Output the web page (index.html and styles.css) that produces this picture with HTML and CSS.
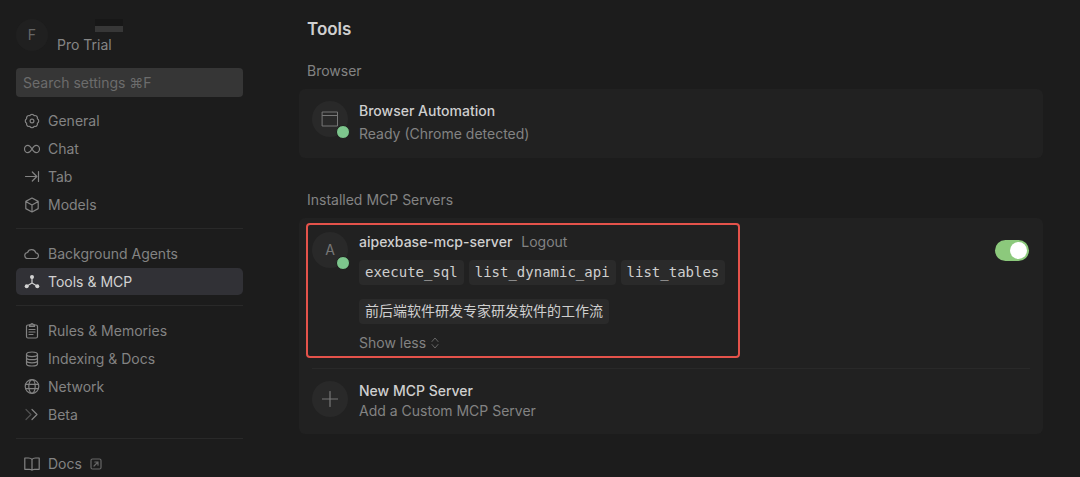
FILE: index.html
```html
<!DOCTYPE html>
<html lang="en">
<head>
    <meta charset="UTF-8">
    <meta name="viewport" content="width=device-width, initial-scale=1.0">
    <title>Tools &amp; MCP</title>
    <link rel="stylesheet" href="styles.css">
</head>
<body>
    <aside class="sidebar">
        <div class="account">
            <div class="account-avatar">F</div>
            <div class="account-info">
                <div class="account-name"></div>
                <div class="account-plan">Pro Trial</div>
            </div>
        </div>

        <input type="search" class="search" placeholder="Search settings ⌘F" aria-label="Search settings">

        <nav>
            <div class="nav-group">
                <a href="#general" class="nav-item">
                    <svg class="icon" viewBox="0 0 16 16"><path d="M5.780 2.640A2.500 2.500 0 0 1 10.220 2.640A2.500 2.500 0 0 1 13.360 5.780A2.500 2.500 0 0 1 13.360 10.220A2.500 2.500 0 0 1 10.220 13.360A2.500 2.500 0 0 1 5.780 13.360A2.500 2.500 0 0 1 2.640 10.220A2.500 2.500 0 0 1 2.640 5.780A2.500 2.500 0 0 1 5.780 2.640z"/><circle cx="8" cy="8" r="1.900"/></svg>
                    General
                </a>
                <a href="#chat" class="nav-item">
                    <svg class="icon" viewBox="0 0 16 16"><path d="M8 8C6.500 5.500 5.500 4.300 3.900 4.300a3.400 3.700 0 0 0 0 7.400C5.500 11.700 6.500 10.500 8 8s2.500-3.700 4.100-3.700a3.400 3.700 0 0 1 0 7.400C10.500 11.700 9.500 10.500 8 8z"/></svg>
                    Chat
                </a>
                <a href="#tab" class="nav-item">
                    <svg class="icon" viewBox="0 0 16 16"><path d="M1.500 7.500h11M8.300 3l4.500 4.500L8.300 12M14.500 2.500v10"/></svg>
                    Tab
                </a>
                <a href="#models" class="nav-item">
                    <svg class="icon" viewBox="0 0 16 16"><path d="M8 1l6.200 3.400v7.200L8 15l-6.200-3.400V4.400zM1.800 4.400L8 8l6.200-3.600M8 8v7"/></svg>
                    Models
                </a>
            </div>
            <hr>
            <div class="nav-group">
                <a href="#agents" class="nav-item">
                    <svg class="icon" viewBox="0 0 16 16"><path d="M4 12.500a3 3 0 0 1-.4-6 4.300 4.300 0 0 1 8.200.3 2.900 2.900 0 0 1 .5 5.700z"/></svg>
                    Background Agents
                </a>
                <a href="#tools" class="nav-item active" aria-current="page">
                    <svg class="icon" viewBox="0 0 16 16"><path d="M8 3v6M8 9l-5 3M8 9l5 3"/><g class="solid"><circle cx="8" cy="3" r="2"/><circle cx="2.700" cy="12.300" r="2"/><circle cx="13.300" cy="12.300" r="2"/></g></svg>
                    Tools &amp; MCP
                </a>
            </div>
            <hr>
            <div class="nav-group">
                <a href="#rules" class="nav-item">
                    <svg class="icon" viewBox="0 0 16 16"><rect x="2.500" y="2" width="11" height="13" rx="1.500"/><path d="M5.500 3.500V1.800h1.300a1.200 1.200 0 0 1 2.400 0h1.300v1.700zM5 6.500h6M5 9h6M5 11.500h4"/></svg>
                    Rules &amp; Memories
                </a>
                <a href="#indexing" class="nav-item">
                    <svg class="icon" viewBox="0 0 16 16"><ellipse cx="8" cy="3.300" rx="5.500" ry="2.300"/><path d="M2.500 3.300v9.400c0 1.300 2.500 2.300 5.500 2.300s5.500-1 5.500-2.300V3.300M2.500 6.400c0 1.300 2.500 2.300 5.500 2.300s5.500-1 5.500-2.300M2.500 9.600c0 1.300 2.500 2.300 5.500 2.300s5.500-1 5.500-2.300"/></svg>
                    Indexing &amp; Docs
                </a>
                <a href="#network" class="nav-item">
                    <svg class="icon" viewBox="0 0 16 16"><circle cx="8" cy="7.500" r="6.800"/><ellipse cx="8" cy="7.500" rx="3.200" ry="6.800"/><path d="M1.600 5.300h12.800M1.600 9.700h12.800"/></svg>
                    Network
                </a>
                <a href="#beta" class="nav-item">
                    <svg class="icon" viewBox="0 0 16 16"><path class="faded" d="M2 2.500l5 5-5 5"/><path d="M8 2.500l5 5-5 5"/></svg>
                    Beta
                </a>
            </div>
            <hr>
            <div class="nav-group">
                <a href="#docs" class="nav-item">
                    <svg class="icon" viewBox="0 0 16 16"><path d="M8 3.500C7.300 2.300 6 2 4.500 2H.8v11.300h4.700c1.300 0 2.500.3 2.500 1 0-.7 1.200-1 2.500-1h4.700V2h-3.700C10 2 8.700 2.300 8 3.500zM8 3.500v10.800"/></svg>
                    Docs
                    <svg class="icon-external" viewBox="0 0 12 12"><rect x="1" y="1" width="10" height="10" rx="1.500"/><path d="M4 8l4-4M4.800 4H8v3.200"/></svg>
                </a>
            </div>
        </nav>
    </aside>

    <main>
        <h1>Tools</h1>

        <section>
            <h2>Browser</h2>
            <div class="card">
                <div class="row">
                    <div class="badge online">
                        <svg class="icon-window" viewBox="0 0 18 16"><rect x="1.500" y="1" width="15" height="14"/><path d="M1.500 4.500h15"/></svg>
                    </div>
                    <div class="row-text">
                        <h3>Browser Automation</h3>
                        <p class="status">Ready (Chrome detected)</p>
                    </div>
                </div>
            </div>
        </section>

        <section>
            <h2>Installed MCP Servers</h2>
            <div class="card servers">
                <div class="server">
                    <div class="highlight">
                        <div class="badge online">A</div>
                        <div class="row-text">
                            <div class="server-title">
                                <h3>aipexbase-mcp-server</h3>
                                <button type="button" class="link">Logout</button>
                            </div>
                            <div class="tags">
                                <code>execute_sql</code>
                                <code>list_dynamic_api</code>
                                <code>list_tables</code>
                                <code lang="zh">前后端软件研发专家研发软件的工作流</code>
                            </div>
                            <button type="button" class="link">
                                Show less
                                <svg class="icon-sort" viewBox="0 0 8 12"><path d="M1 4.500L4 1l3 3.500M1 7.500L4 11l3-3.500"/></svg>
                            </button>
                        </div>
                    </div>
                    <input type="checkbox" class="toggle" aria-label="Enable aipexbase-mcp-server" checked>
                </div>
                <hr>
                <div class="row">
                    <div class="badge">
                        <svg class="icon" viewBox="0 0 16 16"><path d="M8 .5v15M.5 8h15"/></svg>
                    </div>
                    <div class="row-text">
                        <h3>New MCP Server</h3>
                        <p>Add a Custom MCP Server</p>
                    </div>
                </div>
            </div>
        </section>
    </main>
</body>
</html>
```
FILE: styles.css
```css
* {
    box-sizing: border-box;
}
body {
    display: flex;
    height: 100vh;
    margin: 0;
    overflow: hidden;
    background: #1c1c1c;
    color: #838383;
    font-family: Inter, "Noto Sans CJK SC", sans-serif;
    font-size: 14px;
    line-height: 20px;
}
h1, h2, h3, p {
    margin: 0;
    font-size: 14px;
    font-weight: 400;
}
hr {
    margin: 10px 0 11px;
    border: none;
    border-top: 1px solid #292929;
}
svg {
    flex: none;
    fill: none;
    stroke: currentColor;
    stroke-width: 1.2;
    stroke-linejoin: round;
    stroke-linecap: round;
}
.icon {
    width: 16px;
    height: 16px;
}

/* Sidebar */
.sidebar {
    flex: none;
    width: 243px;
    padding: 19px 0 0 16px;
}
.account {
    display: flex;
    gap: 9px;
}
.account-avatar {
    width: 32px;
    height: 32px;
    border-radius: 50%;
    background: #202020;
    color: #666;
    line-height: 32px;
    text-align: center;
}
.account-name {
    width: 28px;
    height: 13px;
    margin: 0 0 3px 38px;
    border-top: 7px solid #171717;
    background: #373737;
}
.account-plan {
    color: #858585;
}
.search {
    display: block;
    width: 100%;
    height: 29px;
    margin: 13px 0 10px;
    padding: 0 7px;
    border: none;
    border-radius: 4px;
    background: #363636;
    color: #ccc;
    font: inherit;
}
.search::placeholder {
    color: #6c6c6c;
}
.nav-group {
    display: flex;
    flex-direction: column;
    gap: 1px;
}
.nav-item {
    display: flex;
    align-items: center;
    gap: 8px;
    height: 27px;
    padding: 0 8px;
    border-radius: 5px;
    color: #838383;
    text-decoration: none;
}
.nav-item.active {
    background: #313136;
    color: #d2d2d2;
}
.solid {
    fill: currentColor;
    stroke: none;
}
.faded {
    opacity: 0.5;
}
.icon-external {
    width: 12px;
    height: 12px;
    color: #666;
}

/* Content */
main {
    flex: 1;
    padding: 19px 37px 0 56px;
}
h1 {
    padding-left: 8px;
    color: #cfcfcf;
    font-size: 17px;
    font-weight: 600;
}
section {
    margin-top: 22px;
}
section + section {
    margin-top: 32px;
}
h2 {
    padding-left: 8px;
    margin-bottom: 8px;
}
h3 {
    color: #cfcfcf;
    font-weight: 500;
}
.card {
    padding: 12px 13px;
    border-radius: 6px;
    background: #212121;
}
.row {
    display: flex;
    gap: 11px;
}
.status {
    margin-top: 3px;
    margin-bottom: 2px;
}
.badge {
    position: relative;
    display: flex;
    align-items: center;
    justify-content: center;
    flex: none;
    width: 36px;
    height: 36px;
    border-radius: 50%;
    background: #292929;
    color: #777;
}
.online::after {
    content: "";
    position: absolute;
    right: -2px;
    bottom: -2px;
    width: 12px;
    height: 12px;
    border: 1px solid #1c1c1c;
    border-radius: 50%;
    background: #7dc68d;
}
.icon-window {
    width: 18px;
    height: 16px;
    stroke-width: 1;
}
.servers {
    padding: 5px 13px 13px 7px;
}
.servers hr {
    margin: 10px 0 12px 6px;
}
.servers .row {
    padding-left: 6px;
}
.server {
    display: flex;
    align-items: flex-start;
    justify-content: space-between;
}
.highlight {
    display: flex;
    gap: 11px;
    padding: 7px 9px 3px 4px;
    border: 2px solid #e5534b;
    border-radius: 4px;
}
.highlight .row-text {
    max-width: 370px;
}
.server-title {
    display: flex;
    gap: 9px;
}
.link {
    display: flex;
    align-items: center;
    gap: 5px;
    padding: 0;
    border: none;
    background: none;
    color: #838383;
    font: inherit;
    cursor: pointer;
}
.icon-sort {
    width: 8px;
    height: 12px;
    color: #666;
    stroke-width: 1;
}
.tags {
    display: flex;
    flex-wrap: wrap;
    gap: 14px 5px;
    margin: 8px 0 9px;
}
code {
    padding: 0 6px;
    border-radius: 4px;
    background: #2a2a2a;
    color: #cfcfcf;
    font-family: "DejaVu Sans Mono", "Noto Sans CJK SC", monospace;
    font-size: 14px;
    line-height: 25px;
}
.toggle {
    display: flex;
    align-items: center;
    justify-content: flex-end;
    appearance: none;
    width: 34px;
    height: 21px;
    margin: 17px 1px 0 0;
    padding: 2px;
    border-radius: 11px;
    background: #8cc97c;
}
.toggle::before {
    content: "";
    width: 17px;
    height: 17px;
    border-radius: 50%;
    background: #fff;
}
.toggle:not(:checked) {
    justify-content: flex-start;
    background: #444;
}
```
